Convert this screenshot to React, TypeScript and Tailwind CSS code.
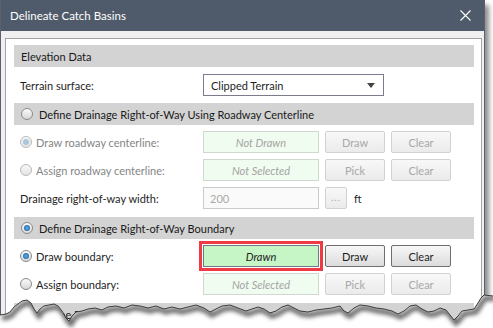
import type { ReactNode } from 'react'

const tear: [number, number][] = [
  [0, 315], [6, 314], [10, 312], [14, 307], [18, 304], [22, 301], [27, 300], [31, 303], [34, 309],
  [37, 313], [40, 309], [44, 306], [49, 305], [54, 304], [58, 306], [62, 311], [66, 318], [69, 321],
  [72, 316], [76, 312], [82, 311], [88, 309], [95, 308], [102, 310], [108, 307], [116, 306],
  [124, 308], [132, 305], [140, 306], [148, 308], [156, 306], [164, 309], [172, 307], [180, 309],
  [188, 307], [196, 305], [204, 308], [210, 312], [216, 309], [222, 306], [230, 305], [238, 308],
  [246, 311], [252, 309], [258, 307], [264, 309], [270, 313], [276, 311], [282, 307], [288, 305],
  [294, 308], [300, 311], [308, 312], [316, 310], [324, 309], [332, 308], [340, 306], [344, 311],
  [348, 313], [354, 308], [360, 305], [368, 306], [376, 308], [384, 309], [392, 311], [398, 314],
  [404, 311], [410, 306], [416, 305], [422, 309], [428, 312], [434, 311], [440, 308], [446, 310],
  [450, 315], [454, 320], [458, 316], [462, 311], [468, 310], [474, 309], [478, 303], [481, 298],
  [484, 295], [493, 296],
]

const line = tear.map(([x, y], i) => `${i ? 'L' : 'M'}${x},${y}`).join(' ')
const below = `${line} L493,328 L0,328 Z`

function Radio({ checked, disabled }: { checked?: boolean; disabled?: boolean }) {
  return (
    <span
      className={`grid h-[12px] w-[12px] shrink-0 place-items-center rounded-full border bg-linear-to-b ${
        disabled ? 'border-[#b9b9b9] from-[#f8f8f8] to-[#e4e4e4]' : 'border-[#8a8a8a] from-[#fbfbfb] to-[#d8d8d8]'
      }`}
    >
      {checked && (
        <span
          className={`h-[6px] w-[6px] rounded-full ${
            disabled ? 'bg-[#a9c6dc]' : 'bg-radial from-[#5fb0e6] to-[#14589a]'
          }`}
        />
      )}
    </span>
  )
}

function Header({ children, radio, checked }: { children: ReactNode; radio?: boolean; checked?: boolean }) {
  return (
    <div className="flex h-[22px] items-center gap-[6px] bg-[#d3d3d3] pl-[7px] text-[#1a1a1a]">
      {radio && <Radio checked={checked} />}
      <span>{children}</span>
    </div>
  )
}

function Row({ label, children, radio, checked, disabled }: {
  label: string
  children: ReactNode
  radio?: boolean
  checked?: boolean
  disabled?: boolean
}) {
  return (
    <div className="flex h-[22px] items-center">
      <div
        className={`flex w-[189px] items-center gap-[4px] pl-[6px] ${disabled ? 'text-[#858585]' : 'text-[#1e1e1e]'}`}
      >
        {radio && <Radio checked={checked} disabled={disabled} />}
        <span>{label}</span>
      </div>
      <div className="flex items-center gap-[6px]">{children}</div>
    </div>
  )
}

function Field({ text, state }: { text: string; state: 'off' | 'drawn' }) {
  if (state === 'drawn') {
    return (
      <div className="relative">
        <div className="absolute -inset-[4px] border-[3px] border-[#ee3a42]" />
        <div className="flex h-[22px] w-[116px] items-center justify-center border border-[#6d7984] bg-[#c6f5c6] italic text-[#222]">
          {text}
        </div>
      </div>
    )
  }
  return (
    <div className="flex h-[22px] w-[116px] items-center justify-center border border-[#d0d8d0] bg-[#f0fcef] italic text-[#a4a4a4]">
      {text}
    </div>
  )
}

function Btn({ children, disabled, w = 'w-[60px]' }: { children: ReactNode; disabled?: boolean; w?: string }) {
  return (
    <div
      className={`flex h-[22px] ${w} items-center justify-center rounded-[2px] border bg-linear-to-b ${
        disabled
          ? 'border-[#d2d2d2] from-[#f8f8f8] to-[#ebebeb] text-[#a8a8a8]'
          : 'border-[#6f6f6f] from-[#f7f7f7] to-[#dcdcdc] text-[#1e1e1e]'
      }`}
    >
      {children}
    </div>
  )
}

export default function App() {
  return (
    <div className="relative h-[328px] w-[493px] overflow-hidden bg-white font-['Lato','Liberation_Sans',sans-serif] text-[11px] leading-none">
      <div className="w-[485px] border-x border-b border-[#58626e] shadow-[4px_5px_5px_rgba(0,0,0,0.45)]">
        <div className="flex h-[31px] items-center justify-between bg-[#4f5b6a] pl-[9px] pr-[9px] text-[11.5px] text-white">
          <span>Delineate Catch Basins</span>
          <svg width="11" height="11" viewBox="0 0 11 11" className="mr-[4px]">
            <path d="M0.5 0.5 L10.5 10.5 M10.5 0.5 L0.5 10.5" stroke="#fff" strokeWidth="1.1" />
          </svg>
        </div>
        <div className="bg-[#f0f0f0] pb-[20px] pl-[4px] pr-[2px] pt-[7px]">
          <div className="flex flex-col border border-[#a3a3a3] bg-white pb-[30px] pl-[8px] pr-[7px] pt-[6px]">
            <Header>Elevation Data</Header>
            <div className="mt-[7px]">
              <Row label="Terrain surface:">
                <div className="flex h-[22px] w-[181px] items-center justify-between border border-[#7b7b8e] bg-white pl-[7px] pr-[8px] text-[#1e1e1e]">
                  <span>Clipped Terrain</span>
                  <svg width="8" height="5" viewBox="0 0 8 5">
                    <path d="M0 0 H8 L4 5 Z" fill="#444" />
                  </svg>
                </div>
              </Row>
            </div>
            <div className="mt-[7px]">
              <Header radio>Define Drainage Right-of-Way Using Roadway Centerline</Header>
            </div>
            <div className="mt-[6px]">
              <Row label="Draw roadway centerline:" radio checked disabled>
                <Field text="Not Drawn" state="off" />
                <Btn disabled>Draw</Btn>
                <Btn disabled>Clear</Btn>
              </Row>
            </div>
            <div className="mt-[6px]">
              <Row label="Assign roadway centerline:" radio disabled>
                <Field text="Not Selected" state="off" />
                <Btn disabled>Pick</Btn>
                <Btn disabled>Clear</Btn>
              </Row>
            </div>
            <div className="mt-[6px]">
              <Row label="Drainage right-of-way width:">
                <div className="flex h-[22px] w-[116px] items-center border border-[#cbcbcb] bg-[#fafafa] pl-[6px] text-[#a9a9a9]">
                  200
                </div>
                <Btn disabled w="w-[22px]">
                  <span className="-mt-[2px] text-[10px] tracking-[1px]">...</span>
                </Btn>
                <span className="ml-[1px] text-[#1e1e1e]">ft</span>
              </Row>
            </div>
            <div className="mt-[8px]">
              <Header radio checked>Define Drainage Right-of-Way Boundary</Header>
            </div>
            <div className="mt-[6px]">
              <Row label="Draw boundary:" radio checked>
                <Field text="Drawn" state="drawn" />
                <Btn>Draw</Btn>
                <Btn>Clear</Btn>
              </Row>
            </div>
            <div className="mt-[6px]">
              <Row label="Assign boundary:" radio>
                <Field text="Not Selected" state="off" />
                <Btn disabled>Pick</Btn>
                <Btn disabled>Clear</Btn>
              </Row>
            </div>
            <div className="mt-[8px]">
              <Header radio>Define Drainage Catch Basins</Header>
            </div>
          </div>
        </div>
      </div>

      <svg className="pointer-events-none absolute left-0 top-0" width="493" height="328" viewBox="0 0 493 328">
        <defs>
          <clipPath id="below">
            <path d={below} />
          </clipPath>
          <filter id="blur" x="-10%" y="-50%" width="120%" height="200%">
            <feGaussianBlur stdDeviation="2.2" />
          </filter>
        </defs>
        <path d={below} fill="#fff" />
        <g clipPath="url(#below)">
          <path d={line} transform="translate(2 3)" fill="none" stroke="#4a4a4a" strokeWidth="5" filter="url(#blur)" opacity="0.85" />
        </g>
        <path d={line} fill="none" stroke="#3a3a3a" strokeWidth="1" />
      </svg>
    </div>
  )
}
